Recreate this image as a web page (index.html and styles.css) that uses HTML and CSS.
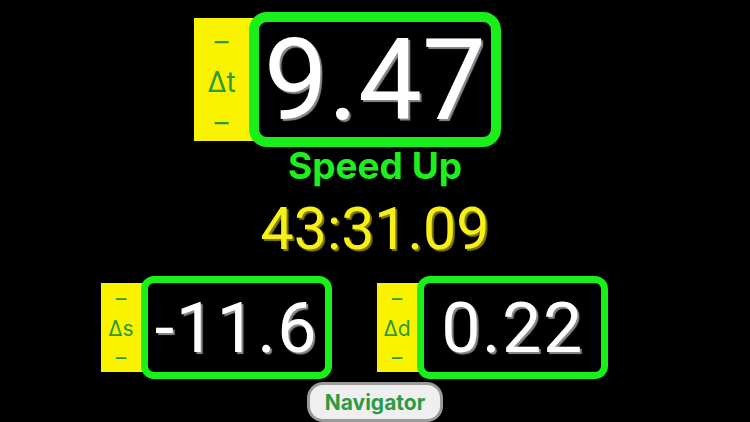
FILE: index.html
```html
<!DOCTYPE html>
<html>
<head>
<meta charset="utf-8">
<link rel="stylesheet" href="styles.css">
</head>
<body>
<main class="screen">
  <div class="row top-row">
    <div class="label label-lg">
      <span class="dash">–</span>
      <span class="sym">Δt</span>
      <span class="dash">–</span>
    </div>
    <div class="box box-lg"><span class="num num-lg">9.47</span></div>
  </div>
  <div class="status">Speed Up</div>
  <div class="clock">43:31.09</div>
  <div class="row bottom-row">
    <div class="pair">
      <div class="label label-sm">
        <span class="dash">–</span>
        <span class="sym">Δs</span>
        <span class="dash">–</span>
      </div>
      <div class="box box-sm"><span class="num num-sm">-11.6</span></div>
    </div>
    <div class="pair">
      <div class="label label-sm">
        <span class="dash">–</span>
        <span class="sym">Δd</span>
        <span class="dash">–</span>
      </div>
      <div class="box box-sm"><span class="num num-sm">0.22</span></div>
    </div>
  </div>
  <div class="nav-row">
    <button class="nav-btn">Navigator</button>
  </div>
</main>
</body>
</html>
```
FILE: styles.css
```css
html, body {
  margin: 0;
  padding: 0;
  background: #000;
}
body {
  width: 750px;
  height: 422px;
  overflow: hidden;
  font-family: Inter, "Liberation Sans", Arial, sans-serif;
}
.screen {
  display: flex;
  flex-direction: column;
  align-items: center;
}
.row {
  display: flex;
  align-items: center;
  justify-content: center;
}
.top-row {
  margin-top: 12px;
  padding-right: 55px;
}
.label {
  display: flex;
  flex-direction: column;
  align-items: center;
  justify-content: space-between;
  background: #f9f300;
  color: #2f9a3c;
  box-sizing: border-box;
}
.label-lg {
  width: 65px;
  height: 123px;
  margin-right: -10px;
  padding: 7px 10px 3px 0;
  font-size: 28px;
  line-height: 32px;
}
.label-sm {
  width: 50px;
  height: 89px;
  margin-right: -10px;
  padding: 4px 10px 2px 0;
  font-size: 21px;
  line-height: 24px;
}
.dash {
  display: block;
}
.box {
  display: flex;
  align-items: center;
  justify-content: center;
  background: #000;
  border-style: solid;
  border-color: #19ef19;
  box-sizing: border-box;
}
.box-lg {
  width: 252px;
  height: 135px;
  border-width: 10px;
  border-radius: 18px;
}
.box-sm {
  width: 191px;
  height: 103px;
  border-width: 7px;
  border-radius: 13px;
}
.num {
  font-family: Roboto, "Liberation Sans", Arial, sans-serif;
  color: #fff;
  text-shadow: 2px 2px 1px #8a8a8a;
  line-height: 1;
}
.num-lg {
  font-size: 114px;
  letter-spacing: 0;
}
.num-sm {
  font-size: 70px;
  letter-spacing: 1.5px;
}
.status {
  margin-top: 1px;
  font-size: 37px;
  line-height: 36px;
  font-weight: 700;
  color: #1ef01e;
}
.clock {
  margin-top: 15px;
  font-family: Roboto, "Liberation Sans", Arial, sans-serif;
  font-size: 59px;
  line-height: 59px;
  color: #f6ef1a;
  text-shadow: 2px 2px 1px #7f7a10;
}
.bottom-row {
  margin-top: 18px;
  padding-right: 41px;
  gap: 45px;
}
.pair {
  display: flex;
  align-items: center;
}
.nav-row {
  margin-top: 3px;
  display: flex;
  justify-content: center;
}
.nav-btn {
  width: 136px;
  height: 40px;
  border: 3px solid #9a9a9a;
  border-radius: 16px;
  background: #efefef;
  color: #2f9a46;
  font-family: Inter, "Liberation Sans", Arial, sans-serif;
  font-size: 21px;
  font-weight: 700;
  padding: 0;
}
```
